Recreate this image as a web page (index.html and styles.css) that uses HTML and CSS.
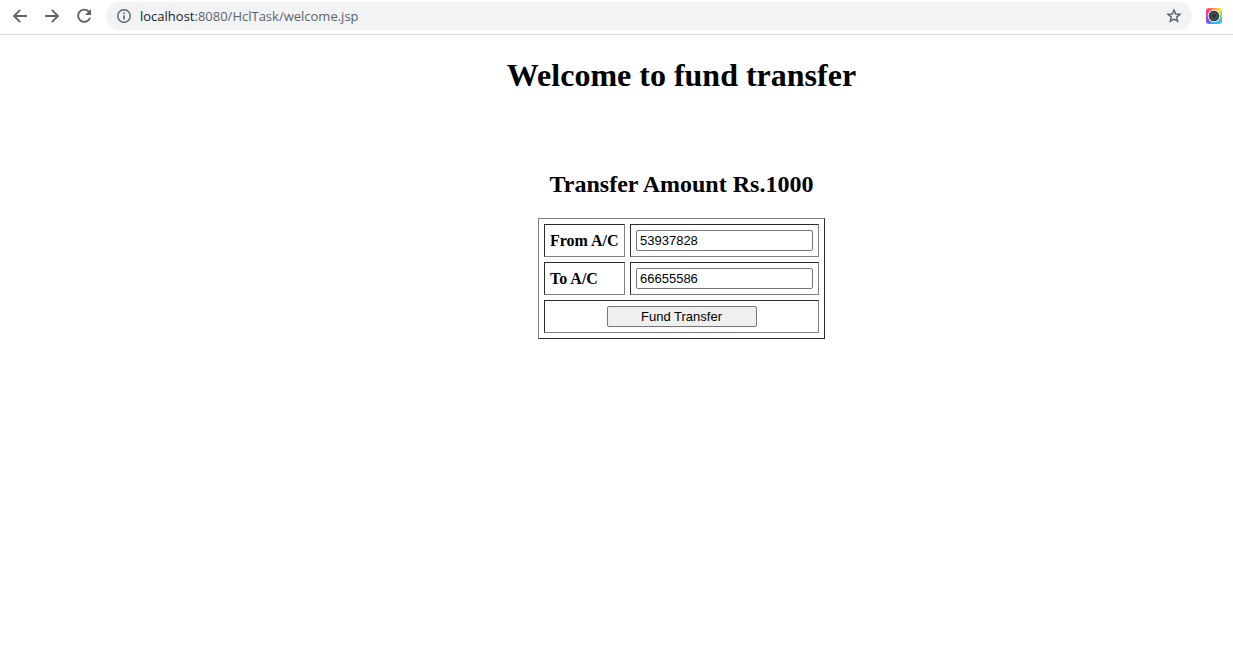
FILE: index.html
```html
<!DOCTYPE html>
<html lang="en">
<head>
<meta charset="utf-8">
<title>Fund transfer</title>
<link rel="stylesheet" href="styles.css">
</head>
<body>
<header class="toolbar">
  <button class="icon-button" type="button" aria-label="Back">
    <svg width="20" height="20" viewBox="0 0 20 20"><path fill="none" stroke="currentColor" stroke-width="1.900" d="M17 10H4.500M10.200 3.800L4 10l6.200 6.200"/></svg>
  </button>
  <button class="icon-button" type="button" aria-label="Forward">
    <svg width="20" height="20" viewBox="0 0 20 20"><path fill="none" stroke="currentColor" stroke-width="1.900" d="M3 10h12.500M9.800 3.800L16 10l-6.200 6.200"/></svg>
  </button>
  <button class="icon-button" type="button" aria-label="Reload">
    <svg width="20" height="20" viewBox="0 0 20 20"><path fill="none" stroke="currentColor" stroke-width="1.900" d="M14.800 5.700A6.100 6.100 0 1 0 16 11.700"/><path fill="currentColor" d="M17 3v6h-6z"/></svg>
  </button>
  <div class="address">
    <svg class="info" width="16" height="16" viewBox="0 0 16 16"><circle cx="8" cy="8" r="6.300" fill="none" stroke="currentColor" stroke-width="1.400"/><path fill="currentColor" d="M7.200 4.500h1.600v1.600H7.200zM7.200 7.200h1.600v4.300H7.200z"/></svg>
    <a class="url" href="#"><span class="host">localhost</span>:8080/HclTask/welcome.jsp</a>
    <button class="icon-button star" type="button" aria-label="Bookmark">
      <svg width="18" height="18" viewBox="0 0 24 24"><path fill="none" stroke="currentColor" stroke-width="1.900" d="M12 4l2.200 5.300 5.700.5-4.300 3.700 1.300 5.600-4.900-3-4.900 3 1.300-5.600-4.300-3.700 5.700-.5z"/></svg>
    </button>
  </div>
  <button class="extension" type="button" aria-label="Camera extension">
    <svg width="14" height="14" viewBox="0 0 14 14"><circle cx="7" cy="7" r="6.200" fill="#fff"/><circle cx="7" cy="7" r="4.800" fill="#3b444c" stroke="#20282e" stroke-width="1"/><circle cx="7" cy="7" r="2.800" fill="#28323a" stroke="#56636d" stroke-width=".8"/></svg>
  </button>
</header>
<main class="page">
  <h1 class="title">Welcome to fund transfer</h1>
  <h2 class="subtitle">Transfer Amount Rs.1000</h2>
  <form>
    <table class="transfer">
      <tr>
        <th><label for="from">From A/C</label></th>
        <td><input class="field" id="from" type="text" value="53937828"></td>
      </tr>
      <tr>
        <th><label for="to">To A/C</label></th>
        <td><input class="field" id="to" type="text" value="66655586"></td>
      </tr>
      <tr>
        <td class="actions" colspan="2"><button class="submit" type="button">Fund Transfer</button></td>
      </tr>
    </table>
  </form>
</main>
</body>
</html>
```
FILE: styles.css
```css
* {
  box-sizing: border-box;
}

body {
  margin: 0;
  background: #fff;
  color: #000;
  font-family: "Liberation Serif", "Times New Roman", serif;
  font-size: 16px;
}

.toolbar {
  display: flex;
  align-items: center;
  gap: 12px;
  padding: 2px 11px 4px 10px;
  border-bottom: 1px solid #dadce0;
  color: #5f6368;
}

.icon-button,
.extension {
  display: flex;
  flex: none;
  padding: 0;
  border: 0;
  background: none;
  color: #5f6368;
}

.address {
  display: flex;
  flex: 1;
  align-items: center;
  gap: 8px;
  height: 28px;
  padding: 0 9px 0 10px;
  border-radius: 14px;
  background: #f1f3f4;
}

.info {
  flex: none;
}

.url {
  flex: 1;
  color: #5f6368;
  font-family: "Open Sans", sans-serif;
  font-size: 13px;
  text-decoration: none;
}

.host {
  color: #202124;
}

.extension {
  align-items: center;
  justify-content: center;
  width: 16px;
  height: 16px;
  margin-left: 2px;
  border-radius: 3px;
  background: conic-gradient(#ff9f2e, #ffdf3a 45deg, #6fdc7a 90deg, #2fc4dc 140deg, #16b8f5 190deg, #7a4df0 230deg, #d735cf 270deg, #ff3e78 315deg, #ff9f2e);
}

.page {
  padding-left: 130px;
  text-align: center;
}

.title {
  margin: 22px 0 76px;
  font-size: 32px;
  line-height: 37px;
}

.subtitle {
  margin: 0 0 20px;
  font-size: 24px;
  line-height: 28px;
}

.transfer {
  margin: 0 auto;
  border: 1px solid;
  border-color: #808080 #2c2c2c #2c2c2c #808080;
  border-spacing: 5px;
}

.transfer th,
.transfer td {
  padding: 5px;
  border: 1px solid;
  border-color: #2c2c2c #808080 #808080 #2c2c2c;
}

.transfer th {
  width: 81px;
  text-align: left;
  white-space: nowrap;
  line-height: 18px;
}

.field,
.submit {
  display: block;
  height: 21px;
  border: 1px solid #767676;
  border-radius: 2px;
  color: #000;
  font-family: "Liberation Sans", Arial, sans-serif;
  font-size: 13px;
}

.field {
  width: 177px;
  padding: 1px 3px;
  background: #fff;
}

.submit {
  width: 150px;
  margin: 0 auto;
  padding: 0;
  background: #efefef;
}
```
